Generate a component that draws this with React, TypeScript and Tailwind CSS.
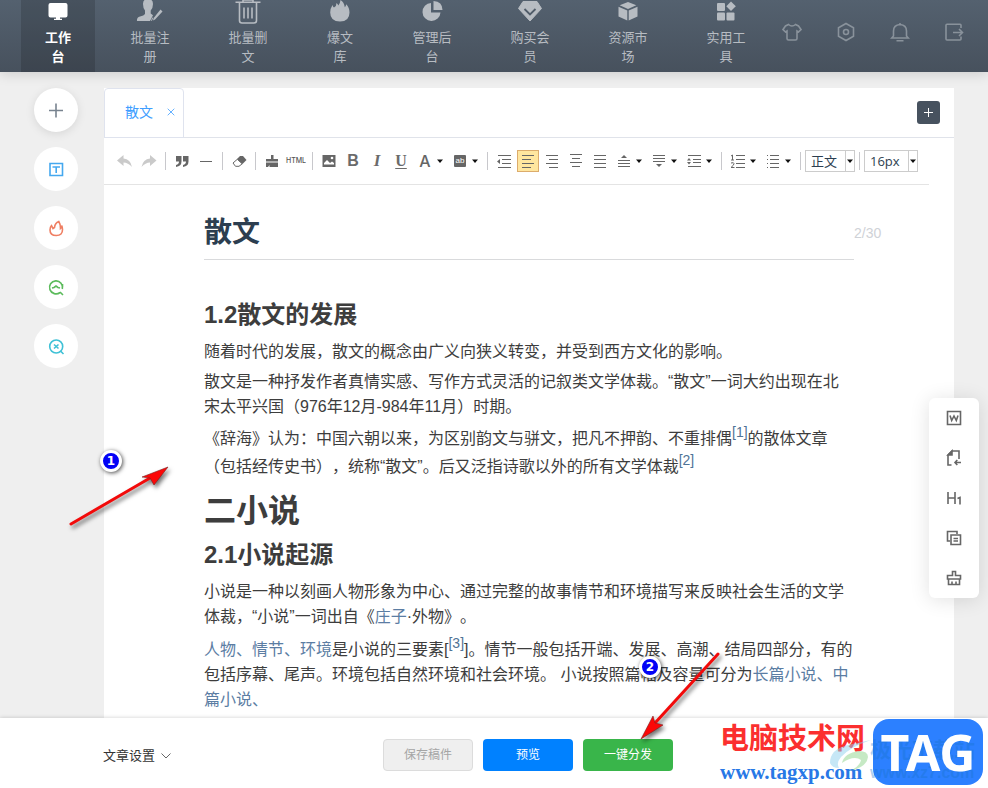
import React from "react";

type IconProps = { children: React.ReactNode; size?: number; className?: string };

// outline icon, 20x20 grid
function Line({ children, size = 20, className = "" }: IconProps) {
  return (
    <svg width={size} height={size} viewBox="0 0 20 20" fill="none" stroke="currentColor" strokeWidth="1.6" className={className}>
      {children}
    </svg>
  );
}

// filled icon, 28x24 grid
function NavIcon({ children }: { children: React.ReactNode }) {
  return (
    <svg width="28" height="24" viewBox="0 0 28 24" fill="currentColor" className="block">
      {children}
    </svg>
  );
}

const navItems = [
  {
    label: ["工作", "台"],
    active: true,
    width: "w-[74px]",
    icon: <path d="M6.500 3h15q2 0 2 2v10.500q0 2-2 2h-5.500v1.200h2v1.300h-8v-1.300h2v-1.200H6.500q-2 0-2-2V5q0-2 2-2z" />,
  },
  {
    label: ["批量注", "册"],
    width: "w-[86px]",
    icon: (
      <>
        <path d="M7 4q0-5 5-5t5 5q0 4-2.300 6.500v3l2.300 1.800-3 5.700H1q-.5-3.500 3-4.500 4-1 5-2.500V10.500Q7 8 7 4z" />
        <path d="M24.500 9.500l2 2-7.500 8-2 1 .700-2.500z" />
        <path d="M15.500 20.800l1.200-3.200" stroke="currentColor" />
      </>
    ),
  },
  {
    label: ["批量删", "文"],
    width: "w-[86px]",
    icon: (
      <g fill="none" stroke="currentColor" strokeWidth="1.600">
        <path d="M1.500 2.200h25M9 2V0h10v2M5.500 2.500v18q0 2.500 2.500 2.500h12q2.500 0 2.500-2.500v-18" />
        <path d="M10 7.500v11M14 7.500v11M18 7.500v11" />
      </g>
    ),
  },
  {
    label: ["爆文", "库"],
    width: "w-[74px]",
    icon: <path d="M14.500 0q3.500 2 4.300 7.200 1.200-1 1.400-3 3.300 3.500 3.300 8.300 0 9-9.500 9-9.800 0-9.800-9 0-4 2.300-7.500.500 2 1.500 2.600Q10.500 6.500 10.500 3q1.500 1 1.800 2.500 1.900-2 2.200-5.500z" />,
  },
  {
    label: ["管理后", "台"],
    width: "w-[86px]",
    icon: (
      <>
        <path d="M13 3a9 9 0 1 0 9.500 9.500H13z" />
        <path d="M15.500 1v9h9q0-8.300-9-9z" />
      </>
    ),
  },
  {
    label: ["购买会", "员"],
    width: "w-[86px]",
    icon: (
      <>
        <path d="M7 1.500h14l4.500 7L14 21 2.500 8.500z" strokeLinejoin="round" stroke="currentColor" />
        <path d="M8.500 9l5.500 5.500L19.500 9" fill="none" stroke="#505c69" strokeWidth="1.800" />
      </>
    ),
  },
  {
    label: ["资源市", "场"],
    width: "w-[86px]",
    icon: (
      <>
        <path d="M14 2l8.300 3.300L14 9 5.700 5.300z" />
        <path d="M4.500 6.800l8.800 3.700v10L4.500 16.500zM23.500 6.800l-8.800 3.700v10l8.800-4z" />
      </>
    ),
  },
  {
    label: ["实用工", "具"],
    width: "w-[86px]",
    icon: (
      <>
        <rect x="5" y="3" width="8" height="8" rx="1" />
        <path d="M19 1.500l4.800 4.700L19 11l-4.700-4.800z" />
        <rect x="5" y="12.500" width="8" height="8" rx="1" />
        <rect x="14.500" y="12.500" width="8" height="8" rx="1" />
      </>
    ),
  },
];

const userIcons = [
  { name: "皮肤", d: "M6.500 2.500q3.500 3 7 0l3 1.500 2.500 3.500-2.500 2.500-1.500-1v7.500q0 1.500-1.500 1.500h-7q-1.500 0-1.500-1.500V9l-1.500 1L1 7.500 3.500 4z" },
  { name: "设置", d: "M10 1.500l7.500 4.300v8.400L10 18.500l-7.500-4.300V5.800zM12.500 10a2.500 2.500 0 1 1-5 0 2.500 2.500 0 0 1 5 0z" },
  { name: "通知", d: "M10 1v1.500M3.500 14V9q0-6 6.500-6.500Q16.500 3 16.500 9v5l1.800 2H1.700zM6.500 18.800h7" },
  { name: "退出", d: "M17 6V3.200q0-1-1-1H3q-1 0-1 1V17q0 1 1 1h13q1 0 1-1v-2.500M9 10.500h9.500M15 7l3.500 3.500L15 14" },
];

const sideButtons = [
  { name: "新建", color: "text-[#78838f] shadow-[0_2px_10px_rgba(0,0,0,0.1)]", art: <path d="M10 3.500v14M3 10.500h14" /> },
  { name: "标题", color: "text-[#45a8ef]", art: <><path d="M4 4.500h12.500v12H4z" /><path d="M6.500 8h7.500M10.200 8v6" /></> },
  { name: "热点", color: "text-[#ef7f63]", art: <path d="M5.500 7.500q-1.500 1.500-1.500 4.500 0 5.500 6.300 5.500t6.200-6q0-2-.8-4 0 2-1.200 3Q14.500 6 12.800 3.500 9 5 8.500 9.500L7 10.500 5.500 7.500z" /> },
  { name: "检测", color: "text-[#5cbb5c]", art: <path d="M16.300 12a6.500 6.500 0 1 0-2.300 3.500M16.500 7v3M14 15l3 3M6 11l2-.5 2-1.500 2 1.500 2 .5" /> },
  { name: "查重", color: "text-[#3fc1d6]", art: <><circle cx="10.200" cy="10.500" r="6.500" /><path d="M14.500 15l3 3M8 8.500l4.500 4M12.500 8.500l-4.500 4" /></> },
];

const floatTools = [
  { name: "导入 Word", art: <><path d="M3.500 3.500h13v13h-13z" /><path d="M6 7.500l1.700 5L10 8l2.300 4.500 1.700-5" /></> },
  { name: "导入文件", art: <><path d="M7.500 17H4V7l4-4h7v8" /><path d="M4 7l4-4v4z" fill="currentColor" /><path d="M17 14.500h-6M13.300 12L11 14.500l2.300 2.500" /></> },
  { name: "标题格式", art: <path d="M4 4v12M11 4v12M4 10h7M13.500 10.500L16 9.500v7" /> },
  { name: "复制", art: <><path d="M6 13H3.500V3.500H13V6" /><path d="M7 7h9.500v9.500H7zM9.500 10.500h4.500M9.500 13h4.500" /></> },
  { name: "清除", art: <path d="M8.500 7.500v-4h3v4h5V11h-13V7.500zM4.500 11v5.500h11V11M8 13.500v3M12 13.500v3" /> },
];

function Sep() {
  return (
    <span className="flex w-[9px] shrink-0 justify-center">
      <span className="h-[18px] w-px bg-[#c8c8cc]" />
    </span>
  );
}

function Caret() {
  return (
    <button aria-label="更多" className="flex h-6 w-[11px] shrink-0 items-center">
      <svg width="6" height="4" viewBox="0 0 6 4"><path d="M0 .5h6L3 4z" fill="#111" /></svg>
    </button>
  );
}

function Tool({ label, children, on, muted }: { label: string; children: React.ReactNode; on?: boolean; muted?: boolean }) {
  return (
    <button aria-label={label} className={`flex h-[22px] w-6 shrink-0 items-center justify-center ${muted ? "text-[#cacaca]" : "text-[#666]"}`}>
      <span className={on ? "border border-[#dcac6c] bg-[#ffe69f]" : ""}>
        <svg width="20" height="20" viewBox="0 0 20 20" fill="currentColor" className="block">{children}</svg>
      </span>
    </button>
  );
}

// horizontal text rows used by the paragraph buttons
function Rows({ rows }: { rows: number[][] }) {
  return <>{rows.map(([x, y, w]) => <rect key={y} x={x} y={y} width={w} height="1" />)}</>;
}

function Picker({ label, value, width }: { label: string; value: string; width: string }) {
  return (
    <div className={`relative h-[22px] shrink-0 border border-[#ccc] ${width}`}>
      <select aria-label={label} defaultValue={value} className="block h-full w-full appearance-none bg-white pl-[5px] font-[Open_Sans,Noto_Sans_CJK_SC,sans-serif] text-[13px] leading-5 text-[#2c3e50] outline-none">
        <option>{value}</option>
      </select>
      <span className="pointer-events-none absolute inset-y-0 right-0 flex w-[9px] items-center justify-center border-l border-[#ccc]">
        <svg width="6" height="4" viewBox="0 0 6 4"><path d="M0 .5h6L3 4z" fill="#111" /></svg>
      </span>
    </div>
  );
}

function Toolbar() {
  return (
    <div className="mr-[25px] flex h-[47px] items-center border-b border-[#e4e4e4] pl-[9px]">
      <Tool label="撤销" muted><path d="M2 9.500L8.500 4v3.500q7 .5 8.500 8.500-4-4.500-8.500-4.500V15z" /></Tool>
      <Tool label="重做" muted><path d="M17.500 9.500L11 4v3.500Q4 8 2.500 16 6.500 11.500 11 11.500V15z" /></Tool>
      <Sep />
      <Tool label="引用"><path d="M4 5h5.500v5.500Q9.500 15 4 16v-2q3-.7 3-3.500H4zM11 5h5.500v5.500q0 4.500-5.500 5.500v-2q3-.7 3-3.500h-3z" /></Tool>
      <Tool label="分隔线"><rect x="4" y="10" width="12" height="1" /></Tool>
      <Sep />
      <Tool label="橡皮擦">
        <path d="M11 5h3l3.500 4-4 4-5.500-5z" />
        <path d="M8.300 8.300L4 12l2.500 3.300H10l3.200-2.500z" fill="none" stroke="currentColor" />
      </Tool>
      <Sep />
      <Tool label="格式刷"><path d="M9 4h2.500v4H16v2.500H4V8h5zM4 11.500h12V16H7.500v-2L6 16H4z" /></Tool>
      <button aria-label="HTML" className="flex h-[22px] w-6 shrink-0 items-center justify-center font-[Inter,sans-serif] text-[7px] font-medium text-[#555]">HTML</button>
      <Sep />
      <Tool label="图片">
        <path d="M3.500 4h13v12h-13z" />
        <path d="M5 13.500v-1.500L8 9l3 3 2-1.500 2 1.500v1.500z" fill="#fff" />
        <circle cx="13" cy="7" r="1.300" fill="#fff" />
      </Tool>
      <button aria-label="加粗" className="h-[22px] w-6 shrink-0 text-base leading-[22px] font-bold text-[#6b6b6b]">B</button>
      <button aria-label="斜体" className="h-[22px] w-6 shrink-0 font-[Liberation_Serif,serif] text-[17px] leading-[22px] font-bold text-[#6b6b6b] italic">I</button>
      <button aria-label="下划线" className="h-[22px] w-6 shrink-0 font-[Liberation_Serif,serif] text-base leading-[22px] font-bold text-[#6b6b6b] underline underline-offset-2">U</button>
      <button aria-label="文字颜色" className="h-[22px] w-6 shrink-0 font-[Inter,sans-serif] text-base leading-[22px] font-medium text-[#666]">A</button>
      <Caret />
      <button aria-label="背景色" className="flex h-[22px] w-6 shrink-0 items-center justify-center">
        <span className="h-3 w-3 rounded-[1px] bg-[#666] text-[8px] leading-[11px] text-white">ab</span>
      </button>
      <Caret />
      <Sep />
      <Tool label="减少缩进"><Rows rows={[[4, 4, 13], [8, 8, 9], [8, 12, 9], [4, 16, 13]]} /><path d="M3 10.500L6 8v5z" /></Tool>
      <Tool label="左对齐" on><Rows rows={[[4, 4, 12], [4, 8, 9], [4, 12, 12], [4, 16, 9]]} /></Tool>
      <Tool label="右对齐"><Rows rows={[[4, 4, 12], [7, 8, 9], [4, 12, 12], [7, 16, 9]]} /></Tool>
      <Tool label="居中"><Rows rows={[[4, 3, 12], [6, 7, 8], [4, 11, 12], [6, 15, 8]]} /></Tool>
      <Tool label="两端对齐"><Rows rows={[[4, 4, 12], [4, 8, 12], [4, 12, 12], [4, 16, 12]]} /></Tool>
      <Tool label="段前距"><Rows rows={[[4, 9, 12], [4, 12, 12], [4, 15, 12]]} /><path d="M7 7h6l-3-3z" /></Tool>
      <Caret />
      <Tool label="段后距"><Rows rows={[[4, 4, 12], [4, 7, 12], [4, 10, 12]]} /><path d="M7 13h6l-3 3z" /></Tool>
      <Caret />
      <Tool label="行间距"><Rows rows={[[4, 4, 13], [9, 8, 8], [9, 11, 8], [4, 15, 13]]} /><path d="M3 9.500h4L5 7zM3 11h4l-2 2.500z" /></Tool>
      <Caret />
      <Sep />
      <Tool label="有序列表">
        <Rows rows={[[8, 4, 9], [8, 8, 9], [8, 12, 9], [8, 16, 9]]} />
        <path d="M3 5l1.500-1v5M3 9h3M3 12q3-1 3 .7 0 1.300-3 3.800h3.500" fill="none" stroke="currentColor" />
      </Tool>
      <Caret />
      <Tool label="无序列表">
        <Rows rows={[[7, 4, 9], [7, 8, 9], [7, 12, 9], [7, 16, 9]]} />
        <path d="M4 4h1v1H4zM4 8h1v1H4zM4 12h1v1H4zM4 16h1v1H4z" />
      </Tool>
      <Caret />
      <Sep />
      <Picker label="段落格式" value="正文" width="w-[50px]" />
      <Sep />
      <Picker label="字号" value="16px" width="w-[54px]" />
    </div>
  );
}

function Ref({ n }: { n: string }) {
  return <sup className="text-sm leading-none text-[#4f7396]">{n}</sup>;
}

function Term({ children }: { children: React.ReactNode }) {
  return <a href="#" className="text-[#5b7da3]">{children}</a>;
}

function Article() {
  return (
    <div className="px-[100px] text-base leading-[25px] whitespace-nowrap text-[#3d3d3d]">
      <div className="relative">
        <input
          aria-label="标题"
          defaultValue="散文"
          className="block h-[75px] w-full border-b border-[#d9dadc] pt-4 text-[28px] font-bold text-[#2c3e50] outline-none"
        />
        <span className="absolute top-[38px] left-full text-sm text-[#cfd2d7]">2/30</span>
      </div>
      <h2 className="mt-9 text-2xl leading-[38px] font-bold">1.2散文的发展</h2>
      <p className="mt-[5px]">随着时代的发展，散文的概念由广义向狭义转变，并受到西方文化的影响。</p>
      <p className="mt-[5px]">
        散文是一种抒发作者真情实感、写作方式灵活的记叙类文学体裁。“散文”一词大约出现在北<br />
        宋太平兴国（976年12月-984年11月）时期。
      </p>
      <p className="mt-[6px] leading-7">
        《辞海》认为：中国六朝以来，为区别韵文与骈文，把凡不押韵、不重排偶<Ref n="[1]" />的散体文章<br />
        （包括经传史书），统称“散文”。后又泛指诗歌以外的所有文学体裁<Ref n="[2]" />
      </p>
      <h1 className="mt-[5px] text-[32px] leading-[50px] font-bold">二小说</h1>
      <h2 className="text-2xl leading-[38px] font-bold">2.1小说起源</h2>
      <p className="mt-[5px]">
        小说是一种以刻画人物形象为中心、通过完整的故事情节和环境描写来反映社会生活的文学<br />
        体裁，“小说”一词出自《<Term>庄子</Term>·外物》。
      </p>
      <p className="mt-2">
        <Term>人物、情节、环境</Term>是小说的三要素[<Ref n="[3]" />]。情节一般包括开端、发展、高潮、结局四部分，有的<br />
        包括序幕、尾声。环境包括自然环境和社会环境。 小说按照篇幅及容量可分为<Term>长篇小说、中</Term><br />
        <Term>篇小说、</Term>
      </p>
    </div>
  );
}

function Watermark() {
  return (
    <div className="pointer-events-none absolute right-[5px] bottom-[3px] flex h-[66px] gap-2">
      <div className="w-[145px] whitespace-nowrap">
        <div className="text-[29px] leading-10 font-bold text-[#fb2f2f]">电脑技术网</div>
        <div className="font-[Liberation_Serif,serif] text-[21px] leading-[26px] font-bold text-[#2878e6]">www.tagxp.com</div>
      </div>
      <div className="flex w-[110px] items-center justify-center rounded-2xl bg-[#2c80ff]">
        <span className="relative z-10 font-[Noto_Sans,sans-serif] text-[50px] leading-none font-bold text-white">TAG</span>
      </div>
      <svg width="44" height="34" viewBox="0 0 44 34" className="absolute top-5 left-[108px] opacity-50">
        <path d="M2 24Q2 10 20 6 34 3 43 1 22 8 13 18q-5 6-2 11-7 0-9-5z" fill="#8ed0ee" />
        <path d="M14 24q2-10 17-12 9 0 9 6-1 10-18 14 10-5 11-11-7-5-19 3z" fill="#8fd58b" />
      </svg>
      <div className="absolute top-[19px] left-[150px] whitespace-nowrap text-[#1672c8]/35">
        <div className="text-[21px] leading-6 font-bold">极光下载站</div>
        <div className="text-base leading-[22px] font-bold">www.xz7.com</div>
      </div>
    </div>
  );
}

function StepBadge({ n, place }: { n: number; place: string }) {
  return (
    <span className={`pointer-events-none absolute flex h-[22px] w-[22px] items-center justify-center rounded-full border-[3px] border-white bg-[#0202f6] font-[DejaVu_Sans,sans-serif] text-xs leading-none font-bold text-white shadow-[1px_1px_4px_rgba(0,0,0,0.7)] ${place}`}>
      {n}
    </span>
  );
}

function Arrow({ d, head, place, w, h }: { d: string; head: string; place: string; w: number; h: number }) {
  return (
    <svg width={w} height={h} viewBox={`0 0 ${w} ${h}`} className={`pointer-events-none absolute overflow-visible drop-shadow-[2px_3px_2px_rgba(0,0,0,0.55)] ${place}`}>
      <path d={d} stroke="#f20a0a" strokeWidth="3" strokeLinecap="round" />
      <path d={head} fill="#fb0707" stroke="#7c2020" strokeWidth="0.600" />
    </svg>
  );
}

export default function App() {
  return (
    <div
      lang="zh-CN"
      className="relative flex h-screen flex-col overflow-hidden bg-[#efefef] font-[Liberation_Sans,Noto_Sans_CJK_SC,sans-serif] [text-spacing-trim:space-all]"
    >
      {/* Header */}
      <header className="relative flex h-[72px] shrink-0 justify-between bg-linear-to-b from-[#54616f] to-[#47515d] pr-6 pl-[21px] shadow-[0_2px_12px_rgba(0,0,0,0.15)]">
        <nav className="flex gap-3">
          {navItems.map((item) => (
            <a
              key={item.label.join("")}
              href="#"
              className={`flex flex-col items-center text-center text-[13px] leading-[19px] ${item.width} ${item.active ? "bg-black/15 font-bold text-white" : "text-[#b7bcc2]"}`}
            >
              <NavIcon>{item.icon}</NavIcon>
              <span className="mt-1">{item.label[0]}<br />{item.label[1]}</span>
            </a>
          ))}
        </nav>
        <div className="flex items-center gap-[34px] pb-2 text-[#89929b]">
          {userIcons.map((icon) => (
            <button key={icon.name} aria-label={icon.name}>
              <Line><path d={icon.d} /></Line>
            </button>
          ))}
        </div>
      </header>

      <div className="flex min-h-0 flex-1 pt-4 pr-[34px]">
        {/* Sidebar */}
        <aside className="flex shrink-0 flex-col gap-[15px] pr-[26px] pl-[34px]">
          {sideButtons.map((b) => (
            <button key={b.name} aria-label={b.name} className={`flex h-11 w-11 items-center justify-center rounded-full bg-white ${b.color}`}>
              <Line>{b.art}</Line>
            </button>
          ))}
        </aside>

        {/* Editor */}
        <main className="min-w-0 flex-1 overflow-hidden bg-white">
          <div className="flex h-[50px] items-center justify-between border-b border-[#e0e3ea] pr-[14px]">
            <div className="flex h-[50px] w-20 items-center justify-between rounded-t border border-[#dfe3ee] pr-2 pb-[2px] pl-5 text-sm text-[#409eff]">
              <a href="#">散文</a>
              <button aria-label="关闭">
                <svg width="8" height="8" viewBox="0 0 8 8" stroke="currentColor" strokeWidth="0.800"><path d="M.7.7l6.600 6.600M7.300.7L.7 7.300" /></svg>
              </button>
            </div>
            <button aria-label="添加" className="flex h-[23px] w-[23px] items-center justify-center rounded-[3px] bg-[#47525f] text-white">
              <svg width="9" height="9" viewBox="0 0 9 9" stroke="currentColor"><path d="M4.500 0v9M0 4.500h9" /></svg>
            </button>
          </div>
          <Toolbar />
          <Article />
        </main>
      </div>

      {/* Floating tools */}
      <div className="absolute top-[398px] right-[9px] flex w-[50px] flex-col rounded-md bg-white text-[#666] shadow-[0_2px_20px_rgba(0,0,0,0.12)]">
        {floatTools.map((t) => (
          <button key={t.name} aria-label={t.name} className="flex h-10 items-center justify-center">
            <Line>{t.art}</Line>
          </button>
        ))}
      </div>

      {/* Footer */}
      <footer className="relative flex h-[70px] shrink-0 items-center bg-white pt-1 pl-[103px] text-[13px] shadow-[0_0_4px_rgba(0,0,0,0.2)]">
        <button className="flex w-[280px] items-center gap-[6px] pt-[2px] text-[#333]">
          文章设置
          <svg width="10" height="6" viewBox="0 0 10 6" fill="none" stroke="#666"><path d="M.5.5L5 5 9.500.5" /></svg>
        </button>
        <div className="flex gap-[10px] text-xs text-white">
          <button className="h-8 w-[90px] rounded border border-[#dcdcdc] bg-[#efefef] text-[#a5a5a5]">保存稿件</button>
          <button className="h-8 w-[90px] rounded bg-[#0081ff]">预览</button>
          <button className="h-8 w-[90px] rounded bg-[#39b54a]">一键分发</button>
        </div>
        <Watermark />
      </footer>

      <StepBadge n={1} place="top-[450px] left-[100px]" />
      <Arrow w={98} h={58} place="top-[467px] left-[70px]" d="M1 57L80 11" head="M98 0L84 18L80 11L72 10z" />
      <StepBadge n={2} place="top-[656px] left-[639px]" />
      <Arrow w={78} h={86} place="top-[653px] left-[641px]" d="M77 1L14 70" head="M0 86L12 63L14 70L22 72z" />
    </div>
  );
}
